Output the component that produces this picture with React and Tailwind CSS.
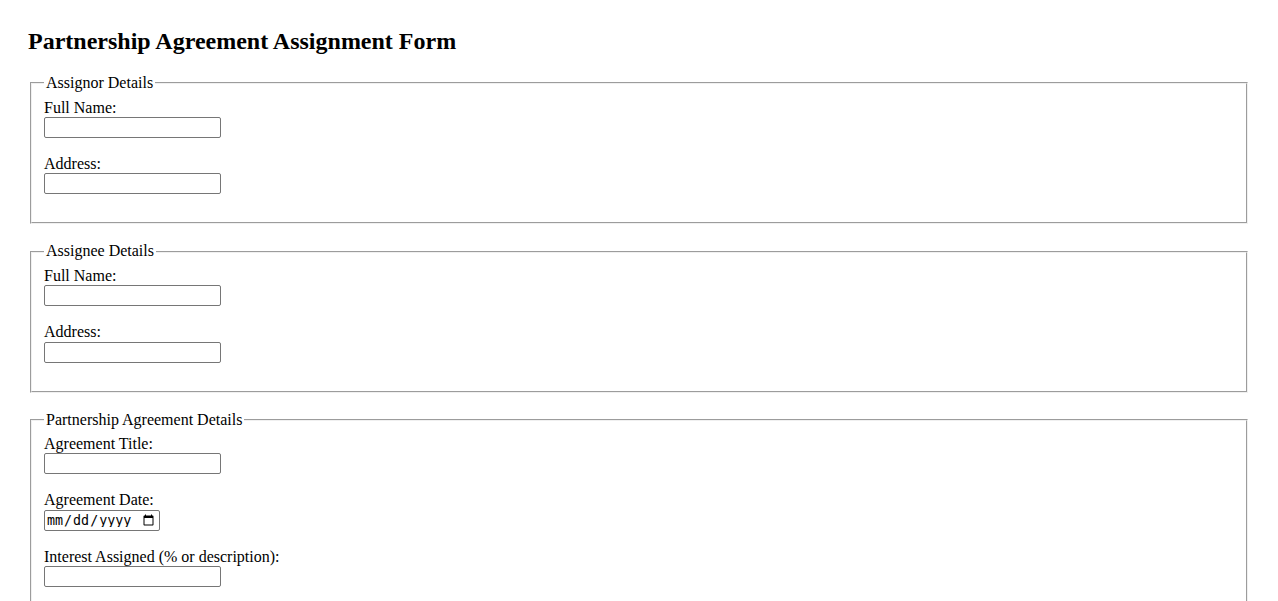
import React from "react";

const sections = [
  {
    legend: "Assignor Details",
    fields: [
      { label: "Full Name:", type: "text" },
      { label: "Address:", type: "text" },
    ],
  },
  {
    legend: "Assignee Details",
    fields: [
      { label: "Full Name:", type: "text" },
      { label: "Address:", type: "text" },
    ],
  },
  {
    legend: "Partnership Agreement Details",
    fields: [
      { label: "Agreement Title:", type: "text" },
      { label: "Agreement Date:", type: "date" },
      { label: "Interest Assigned (% or description):", type: "text" },
      { label: "Consideration Amount:", type: "text" },
      { label: "Effective Date of Assignment:", type: "date" },
    ],
  },
];

function Field({ label, type }) {
  return (
    <div className="mb-[17px] flex flex-col items-start">
      <label className="block leading-[18.4px]">{label}</label>
      {type === "date" ? (
        <input
          type="date"
          className="h-[21px] w-[116px] rounded-[2px] border border-[#767676] bg-white pl-[1px] pr-[2px] text-[13.33px] leading-none"
          style={{ fontFamily: "monospace" }}
        />
      ) : (
        <input
          type="text"
          className="h-[21px] w-[177px] rounded-[2px] border border-[#767676] bg-white px-[2px] text-[13.33px]"
        />
      )}
    </div>
  );
}

function Section({ legend, fields }) {
  return (
    <fieldset className="mx-[2px] mb-[18px] border-2 border-[#f0f0f0] px-[12px] pt-[6px] pb-[11px] [border-style:groove]">
      <legend className="px-[2px] leading-[18.4px]">{legend}</legend>
      {fields.map((f, i) => (
        <Field key={i} label={f.label} type={f.type} />
      ))}
    </fieldset>
  );
}

export default function App() {
  return (
    <div
      className="min-h-screen bg-white p-[28px] text-[16px] text-black"
      style={{ fontFamily: '"Liberation Serif", "Times New Roman", serif' }}
    >
      <h2 className="mb-[18.5px] text-[24px] font-bold leading-[27.6px]">
        Partnership Agreement Assignment Form
      </h2>
      <form>
        {sections.map((s, i) => (
          <Section key={i} legend={s.legend} fields={s.fields} />
        ))}
        <button
          type="submit"
          className="rounded-[2px] border border-[#767676] bg-[#efefef] px-[6px] py-[1px] text-[13.33px]"
        >
          Submit Assignment
        </button>
      </form>
    </div>
  );
}
